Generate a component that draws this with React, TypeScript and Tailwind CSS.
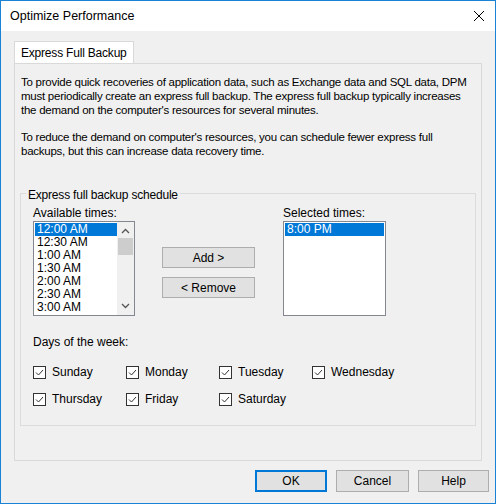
import React from "react";

const times = ["12:00 AM","12:30 AM","1:00 AM","1:30 AM","2:00 AM","2:30 AM","3:00 AM"];
const days = [["Sunday","Monday","Tuesday","Wednesday"],["Thursday","Friday","Saturday"]];

function Check({ label }: { label: string }) {
  return (
    <div className="flex items-center gap-[6px] w-[93px]">
      <div className="w-[13px] h-[13px] border border-[#333] bg-white flex items-center justify-center">
        <svg width="11" height="11" viewBox="0 0 11 11"><path d="M2 5.5 L4.5 8 L9 3" fill="none" stroke="#333" strokeWidth="1" /></svg>
      </div>
      <span>{label}</span>
    </div>
  );
}

export default function App() {
  return (
    <div className="w-[496px] h-[504px] border border-[#1883d7] bg-[#f0f0f0] flex flex-col text-[12px] text-black" style={{ fontFamily: '"Liberation Sans", Arial, sans-serif' }}>
      <div className="h-[30px] bg-white flex items-center justify-between pl-[9px] pr-[10px] shrink-0">
        <span className="text-[12.5px]">Optimize Performance</span>
        <svg width="12" height="12" viewBox="0 0 12 12"><path d="M1 1 L11 11 M11 1 L1 11" stroke="#000" strokeWidth="1" /></svg>
      </div>
      <div className="px-[13px] pt-[10px]">
        <div className="flex">
          <div className="h-[22px] px-[6px] border border-b-0 border-[#d9d9d9] bg-white flex items-center tracking-[-0.2px]">Express Full Backup</div>
        </div>
        <div className="h-[398px] border border-[#d9d9d9] bg-[#f0f0f0] px-[6px] pt-[11px] flex flex-col">
          <p className="leading-[14px] text-[11.5px] tracking-[-0.25px]">To provide quick recoveries of application data, such as Exchange data and SQL data, DPM must periodically create an express full backup. The express full backup typically increases the demand on the computer's resources for several minutes.</p>
          <p className="leading-[14px] mt-[13px] text-[11.5px] tracking-[-0.25px]">To reduce the demand on computer's resources, you can schedule fewer express full backups, but this can increase data recovery time.</p>
          <div className="relative mt-[35px] mx-[-1px] h-[233px] border border-[#dcdcdc] px-[12px] pt-[10px]">
            <span className="absolute -top-[8px] left-[5px] bg-[#f0f0f0] px-[2px] tracking-[-0.2px]">Express full backup schedule</span>
            <div className="flex">
              <div className="w-[102px]">
                <div className="h-[17px]">Available times:</div>
                <div className="h-[95px] border border-[#828790] bg-white flex">
                  <div className="flex-1 pt-[1px] pl-[1px]">
                    {times.map((t, i) => (
                      <div key={t} className={`h-[13px] leading-[13px] pl-[2px] text-[12px] ${i === 0 ? "bg-[#0078d7] text-white" : ""}`}>{t}</div>
                    ))}
                  </div>
                  <div className="w-[17px] flex flex-col items-center bg-[#f0f0f0]">
                    <svg width="9" height="14" viewBox="0 0 9 14" className="mt-[2px]"><path d="M1 9 L4.5 5.5 L8 9" fill="none" stroke="#555" strokeWidth="1.3" /></svg>
                    <div className="w-[15px] h-[17px] bg-[#cdcdcd]"></div>
                    <div className="flex-1" />
                    <svg width="9" height="14" viewBox="0 0 9 14" className="mb-[2px]"><path d="M1 5 L4.5 8.5 L8 5" fill="none" stroke="#555" strokeWidth="1.3" /></svg>
                  </div>
                </div>
              </div>
              <div className="ml-[27px] pt-[43px] flex flex-col gap-[9px]">
                <div className="w-[93px] h-[21px] border border-[#adadad] bg-[#e1e1e1] flex items-center justify-center">Add &gt;</div>
                <div className="w-[93px] h-[21px] border border-[#adadad] bg-[#e1e1e1] flex items-center justify-center">&lt; Remove</div>
              </div>
              <div className="ml-[28px] w-[103px]">
                <div className="h-[17px]">Selected times:</div>
                <div className="h-[95px] border border-[#828790] bg-white pt-[1px] px-[1px]">
                  <div className="h-[13px] leading-[13px] pl-[2px] bg-[#0078d7] text-white">8:00 PM</div>
                </div>
              </div>
            </div>
            <div className="mt-[17px]">Days of the week:</div>
            <div className="mt-[14px] flex flex-col gap-[13px]">
              {days.map((r, i) => (
                <div key={i} className="flex h-[14px]">{r.map(d => <Check key={d} label={d} />)}</div>
              ))}
            </div>
          </div>
        </div>
      </div>
      <div className="flex justify-end gap-[9px] pr-[6px] mt-[9px]">
        <div className="w-[72px] h-[22px] border-2 border-[#0078d7] bg-[#e1e1e1] flex items-center justify-center">OK</div>
        <div className="w-[73px] h-[22px] border border-[#adadad] bg-[#e1e1e1] flex items-center justify-center">Cancel</div>
        <div className="w-[71px] h-[22px] border border-[#adadad] bg-[#e1e1e1] flex items-center justify-center">Help</div>
      </div>
    </div>
  );
}
